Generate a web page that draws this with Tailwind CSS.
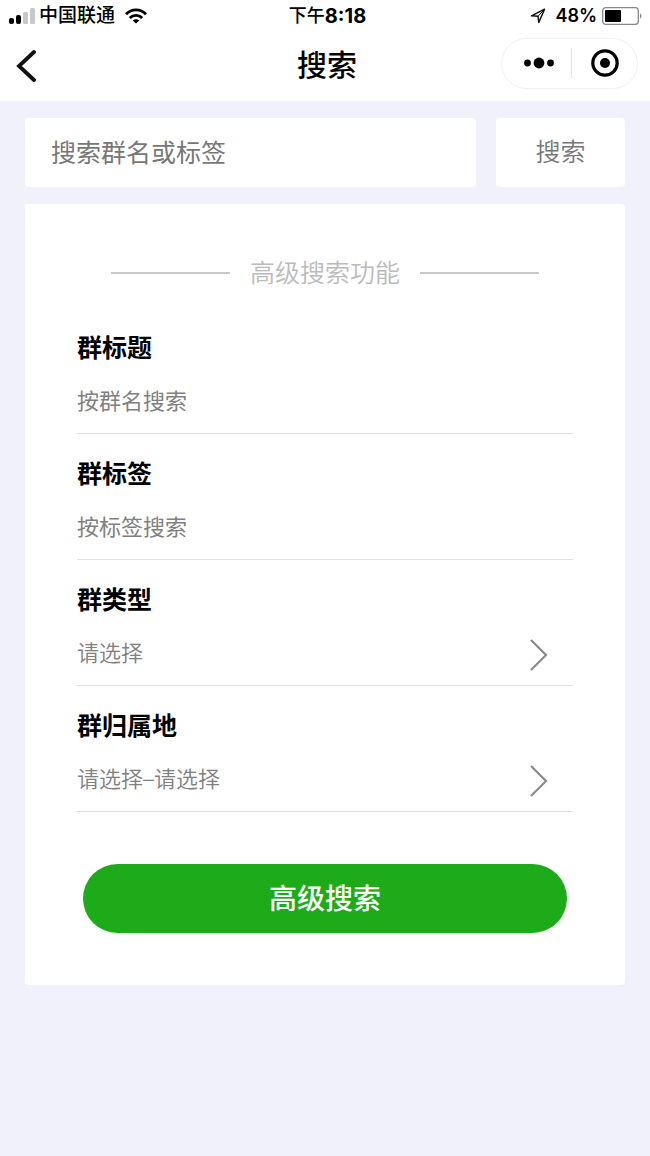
<!DOCTYPE html>
<html lang="zh-CN">
<head>
  <meta charset="UTF-8" />
  <meta name="viewport" content="width=device-width, initial-scale=1.0" />
  <title>搜索</title>
  <script src="https://cdn.jsdelivr.net/npm/@tailwindcss/browser@4"></script>
</head>
<body class="min-h-screen bg-[#f1f1fb] font-['Inter','Noto_Sans_CJK_SC',sans-serif] text-black">

<header class="bg-white h-[101px]">
  <!-- status bar -->
  <div class="flex items-center h-8 pl-[9px] pr-2 text-[18px] leading-8 font-medium">
    <div class="flex flex-1 items-center">
      <svg class="w-[26px] h-4 mr-1" viewBox="0 0 26 16">
        <rect x="0" y="10" width="5" height="6" rx="2" fill="#000" />
        <rect x="7" y="7" width="5" height="9" rx="2" fill="#000" />
        <rect x="14" y="4" width="5" height="12" rx="1.5" fill="#c8c8c8" />
        <rect x="21" y="0" width="5" height="16" rx="1.5" fill="#c8c8c8" />
      </svg>
      <span class="text-[19px]">中国联通</span>
      <svg class="w-[22px] h-4 ml-[10px]" viewBox="0 0 22 16" fill="none" stroke="#000" stroke-width="2.8">
        <path d="M1 6.2C6.6.3 15.4.3 21 6.2" />
        <path d="M4.8 10.1c3.5-3.6 8.9-3.6 12.4 0" />
        <path d="M11 15.6 7.7 12.4c1.800-1.700 4.800-1.700 6.600 0Z" fill="#000" stroke="none" />
      </svg>
    </div>
    <div class="flex items-center pl-1">下午<span class="text-[20px] font-bold">8:18</span></div>
    <div class="flex flex-1 items-center justify-end">
      <svg class="w-4 h-4 mr-[9px]" viewBox="0 0 16 16" fill="none" stroke="#111" stroke-width="1.5" stroke-linejoin="round">
        <path d="M14.5 1.2 1.5 7.8l6.500.5.8 6.200Z" />
        <path d="M14.5 1.2 8 8.3" stroke-width="1" />
      </svg>
      <span class="font-semibold">48%</span>
      <svg class="w-10 h-[18px] ml-[5px]" viewBox="0 0 40 18">
        <rect x=".7" y=".7" width="35.6" height="16.6" rx="3" fill="#fff" stroke="#888" stroke-width="1.3" />
        <rect x="3" y="3" width="16" height="12" rx="1" fill="#000" />
        <path d="M38 6.500c2 .8 2 4.200 0 5Z" fill="#888" />
      </svg>
    </div>
  </div>

  <!-- title bar -->
  <div class="flex items-center h-[66px] pl-4 pr-3">
    <div class="flex flex-1">
      <button type="button" aria-label="返回">
        <svg class="w-[22px] h-[34px]" viewBox="0 0 22 34" fill="none" stroke="#111" stroke-width="3.8" stroke-linecap="round">
          <path d="M18 4 3 18 18 32" />
        </svg>
      </button>
    </div>
    <h1 class="text-[30px] leading-[44px] font-medium">搜索</h1>
    <div class="flex flex-1 justify-end mb-1">
      <div class="flex items-center w-[137px] h-[51px] rounded-full border border-[#f0f0f0]">
        <button type="button" aria-label="更多" class="flex flex-1 justify-center pl-1">
          <svg class="w-[30px] h-3" viewBox="0 0 30 12">
            <circle cx="3.5" cy="6" r="3.4" />
            <circle cx="15" cy="6" r="5.4" />
            <circle cx="26.5" cy="6" r="3.4" />
          </svg>
        </button>
        <span class="w-px h-[30px] bg-[#e4e4e4]"></span>
        <button type="button" aria-label="关闭" class="flex flex-1 justify-center">
          <svg class="w-7 h-7" viewBox="0 0 28 28">
            <circle cx="14" cy="14" r="12.2" fill="none" stroke="#000" stroke-width="3.2" />
            <circle cx="14" cy="14" r="5" />
          </svg>
        </button>
      </div>
    </div>
  </div>
</header>

<main class="px-[25px] pt-[17px]">
  <form class="flex gap-5">
    <input type="text" name="keyword" aria-label="搜索群名或标签" placeholder="搜索群名或标签"
           class="flex-1 min-w-0 h-[69px] px-[26px] bg-white rounded-sm text-[25px] placeholder:text-[#777] focus:outline-none" />
    <button type="button" class="w-[129px] h-[69px] bg-white rounded-sm text-[25px] font-[350] text-[#777]">搜索</button>
  </form>

  <form class="mt-[17px] bg-white rounded-sm px-[52px] pt-[51px] pb-[52px]">
    <div class="flex items-center gap-5 mb-[17px] px-[34px]">
      <span class="flex-1 h-[2px] bg-[#c8c8c8]"></span>
      <h2 class="text-[25px] leading-9 font-[350] text-[#bbb]">高级搜索功能</h2>
      <span class="flex-1 h-[2px] bg-[#c8c8c8]"></span>
    </div>

    <div class="pt-[22px] pb-[14px] border-b border-[#e0e0e0]">
      <label for="title" class="block mb-[17px] text-[25px] leading-9 font-bold">群标题</label>
      <input type="text" id="title" name="title" placeholder="按群名搜索"
             class="block w-full h-9 text-[22px] placeholder:text-[#808080] focus:outline-none" />
    </div>
    <div class="pt-[22px] pb-[14px] border-b border-[#e0e0e0]">
      <label for="tag" class="block mb-[17px] text-[25px] leading-9 font-bold">群标签</label>
      <input type="text" id="tag" name="tag" placeholder="按标签搜索"
             class="block w-full h-9 text-[22px] placeholder:text-[#808080] focus:outline-none" />
    </div>
    <div class="pt-[22px] pb-[14px] border-b border-[#e0e0e0]">
      <label for="type" class="block mb-[17px] text-[25px] leading-9 font-bold">群类型</label>
      <div class="relative">
        <select id="type" name="type" class="block w-full h-9 appearance-none text-[22px] font-[350] text-[#808080] focus:outline-none">
          <option>请选择</option>
        </select>
        <svg class="absolute right-6 top-[3px] w-5 h-[34px] pointer-events-none" viewBox="0 0 20 34" fill="none" stroke="#8a8a8a" stroke-width="2.2">
          <path d="M2 2l15 15L2 32" />
        </svg>
      </div>
    </div>
    <div class="pt-[22px] pb-[14px] border-b border-[#e0e0e0]">
      <label for="region" class="block mb-[17px] text-[25px] leading-9 font-bold">群归属地</label>
      <div class="relative">
        <select id="region" name="region" class="block w-full h-9 appearance-none text-[22px] font-[350] text-[#808080] focus:outline-none">
          <option>请选择–请选择</option>
        </select>
        <svg class="absolute right-6 top-[3px] w-5 h-[34px] pointer-events-none" viewBox="0 0 20 34" fill="none" stroke="#8a8a8a" stroke-width="2.2">
          <path d="M2 2l15 15L2 32" />
        </svg>
      </div>
    </div>

    <div class="px-[6px] mt-[52px]">
      <button type="button" class="block w-full h-[69px] rounded-full bg-[#1eab19] text-[28px] font-medium text-white">高级搜索</button>
    </div>
  </form>
</main>
</body>
</html>
